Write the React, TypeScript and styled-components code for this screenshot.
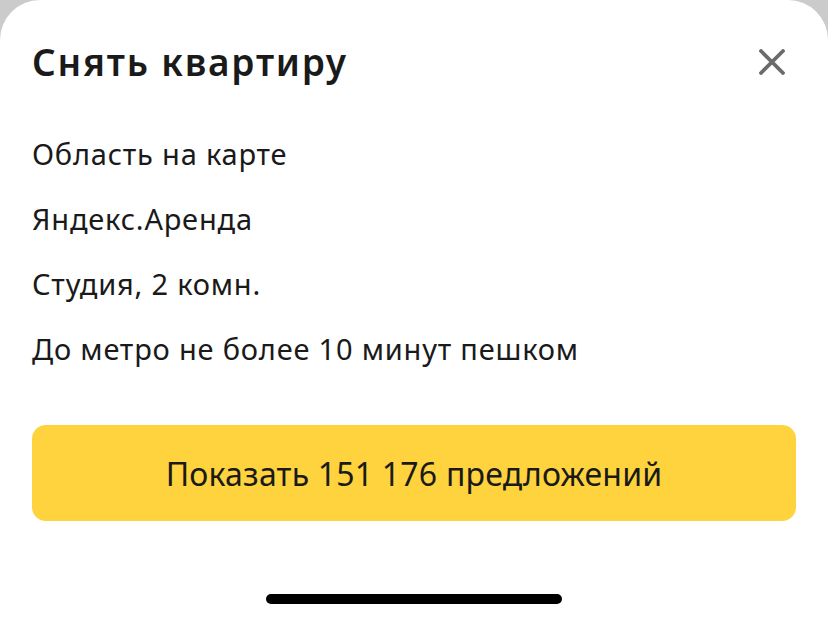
import styled, { createGlobalStyle } from "styled-components";

const GlobalStyle = createGlobalStyle`
  html, body {
    margin: 0;
    padding: 0;
    background: #cbcbcb;
  }
  body {
    font-family: "Noto Sans", "Open Sans", Arial, sans-serif;
    color: #1a1a1a;
  }
`;

const Sheet = styled.div`
  width: 828px;
  height: 620px;
  box-sizing: border-box;
  background: #ffffff;
  border-radius: 40px 40px 0 0;
  padding: 0 32px;
  display: flex;
  flex-direction: column;
  overflow: hidden;
`;

const Header = styled.div`
  display: flex;
  align-items: center;
  justify-content: space-between;
  height: 64px;
  margin-top: 30px;
`;

const Title = styled.h1`
  margin: 0;
  font-size: 37px;
  font-weight: 600;
  letter-spacing: 1.8px;
  line-height: 44px;
`;

const Close = styled.button`
  width: 40px;
  height: 40px;
  margin-right: 4px;
  border: none;
  background: none;
  padding: 0;
  display: flex;
  align-items: center;
  justify-content: center;
  color: #6b6b6b;
`;

const Filters = styled.ul`
  list-style: none;
  margin: 27px 0 0;
  padding: 0;
  display: flex;
  flex-direction: column;
`;

const Filter = styled.li`
  font-size: 29px;
  letter-spacing: 0.8px;
  line-height: 65px;
  height: 65px;
`;

const ShowButton = styled.button`
  margin-top: 44px;
  height: 96px;
  border: none;
  border-radius: 14px;
  background: #fed33e;
  color: #1a1a1a;
  font-family: inherit;
  font-size: 32px;
  letter-spacing: 0.2px;
  display: flex;
  align-items: center;
  justify-content: center;
`;

const Footer = styled.div`
  flex: 1;
  display: flex;
  align-items: flex-end;
  justify-content: center;
  padding-bottom: 16px;
`;

const HomeIndicator = styled.div`
  width: 296px;
  height: 10px;
  border-radius: 5px;
  background: #000000;
`;

const filters = [
  "Область на карте",
  "Яндекс.Аренда",
  "Студия, 2 комн.",
  "До метро не более 10 минут пешком",
];

export default function App() {
  return (
    <>
      <GlobalStyle />
      <Sheet>
        <Header>
          <Title>Снять квартиру</Title>
          <Close aria-label="Закрыть">
            <svg width="26" height="26" viewBox="0 0 26 26">
              <path
                d="M2 2 L24 24 M24 2 L2 24"
                stroke="currentColor"
                strokeWidth="3.8"
                strokeLinecap="round"
              />
            </svg>
          </Close>
        </Header>
        <Filters>
          {filters.map((f) => (
            <Filter key={f}>{f}</Filter>
          ))}
        </Filters>
        <ShowButton>Показать 151 176 предложений</ShowButton>
        <Footer>
          <HomeIndicator />
        </Footer>
      </Sheet>
    </>
  );
}
